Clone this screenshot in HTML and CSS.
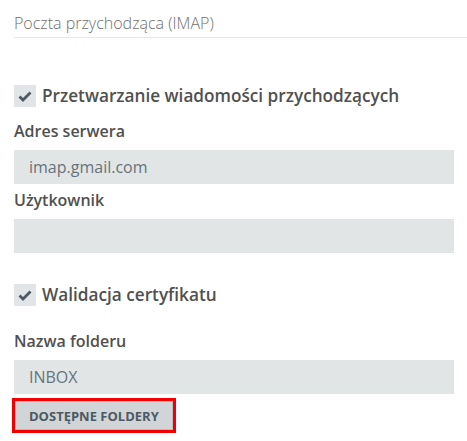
FILE: index.html
```html
<!DOCTYPE html>
<html lang="pl">
  <head>
    <meta charset="UTF-8" />
    <title>Poczta przychodząca</title>
    <link rel="stylesheet" href="styles.css">
  </head>
  <body>
    <div class="panel">
      <div class="section-title">Poczta przychodząca (IMAP)</div>

      <label class="check-row">
        <span class="checkbox">
          <svg viewBox="0 0 16 16" width="16" height="16">
            <path d="M2.5 8.5l3.5 3.5 7.5-7.5" fill="none" stroke="#4d5862" stroke-width="2.8" />
          </svg>
        </span>
        Przetwarzanie wiadomości przychodzących
      </label>

      <div class="field first">
        <label>Adres serwera</label>
        <input type="text" value="imap.gmail.com" />
      </div>
      <div class="field">
        <label>Użytkownik</label>
        <input type="text" />
      </div>

      <label class="check-row cert">
        <span class="checkbox">
          <svg viewBox="0 0 16 16" width="16" height="16">
            <path d="M2.5 8.5l3.5 3.5 7.5-7.5" fill="none" stroke="#4d5862" stroke-width="2.8" />
          </svg>
        </span>
        Walidacja certyfikatu
      </label>

      <div class="field folder">
        <label>Nazwa folderu</label>
        <input type="text" value="INBOX" />
      </div>
      <div class="actions">
        <button class="folders-btn">DOSTĘPNE FOLDERY</button>
      </div>
    </div>
  </body>
</html>
```

FILE: styles.css
```css
body {
  margin: 0;
  font-family: "Open Sans", sans-serif;
  background-color: #fff;
  color: #4a4a4a;
}
.panel {
  padding: 12px 0 0 14px;
}
.section-title {
  font-size: 16px;
  font-weight: 300;
  color: #707070;
  padding-bottom: 3px;
  border-bottom: 1px solid #e8e8e8;
}
.check-row {
  display: flex;
  align-items: center;
  gap: 6px;
  margin-top: 46px;
  font-size: 17.2px;
  font-weight: 600;
  color: #505050;
}
.check-row.cert {
  margin-top: 30px;
}
.checkbox {
  width: 22px;
  height: 22px;
  background-color: #e2e5e7;
  display: flex;
  align-items: center;
  justify-content: center;
}
.field {
  margin-top: 5px;
  margin-right: 13px;
}
.field.first {
  margin-top: 13px;
}
.field.folder {
  margin-top: 24px;
}
.field label {
  display: block;
  font-size: 16px;
  font-weight: 600;
  color: #505050;
  margin-bottom: 8px;
}
.field input {
  display: block;
  box-sizing: border-box;
  width: 100%;
  height: 34px;
  padding: 0 15px;
  border: none;
  background-color: #e2e5e6;
  font-family: "Open Sans", sans-serif;
  font-size: 16px;
  color: #66737c;
}
.actions {
  margin-top: 4px;
  margin-left: -2px;
}
.folders-btn {
  border: 3px solid #f20000;
  box-shadow: inset 0 0 0 1px #b9bcbe;
  background-color: #d2d5d7;
  padding: 6px 14px 5px;
  font-family: "Open Sans", sans-serif;
  font-size: 13px;
  font-weight: 700;
  color: #4d5962;
  cursor: pointer;
}
```
